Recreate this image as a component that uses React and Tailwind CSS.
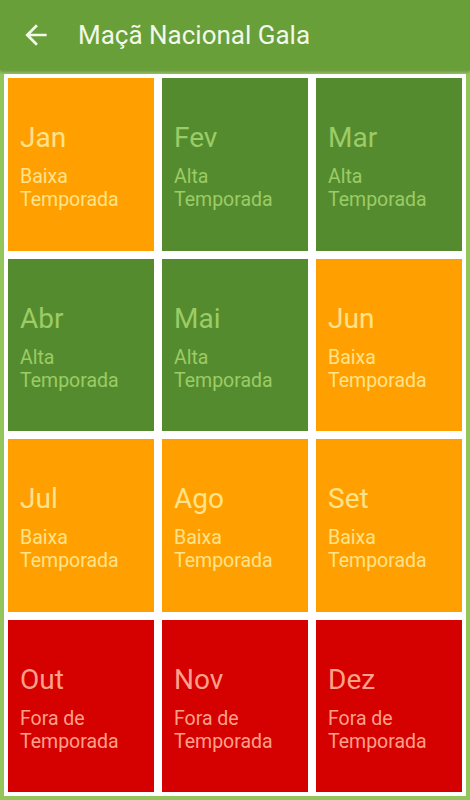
const months = [
  { name: "Jan", season: "baixa" },
  { name: "Fev", season: "alta" },
  { name: "Mar", season: "alta" },
  { name: "Abr", season: "alta" },
  { name: "Mai", season: "alta" },
  { name: "Jun", season: "baixa" },
  { name: "Jul", season: "baixa" },
  { name: "Ago", season: "baixa" },
  { name: "Set", season: "baixa" },
  { name: "Out", season: "fora" },
  { name: "Nov", season: "fora" },
  { name: "Dez", season: "fora" },
];

const seasons = {
  alta: { box: "bg-[#558b2f] text-[#9ccc65]", l1: "Alta", l2: "Temporada" },
  baixa: { box: "bg-[#ffa000] text-[#ffe38c]", l1: "Baixa", l2: "Temporada" },
  fora: { box: "bg-[#d50000] text-[#ffa08a]", l1: "Fora de", l2: "Temporada" },
};

function MonthCard({ name, season }) {
  const s = seasons[season];
  return (
    <div className={`flex flex-col justify-center pl-3 pt-1 ${s.box}`}>
      <div className="text-[28px] leading-[33px]">{name}</div>
      <div className="mt-[11px] text-[19.5px] leading-[23px]">
        <div>{s.l1}</div>
        <div>{s.l2}</div>
      </div>
    </div>
  );
}

export default function App() {
  return (
    <div className="w-[470px] h-[800px] flex flex-col bg-[#92c55a] font-['Roboto',sans-serif]">
      {/* Toolbar */}
      <div className="h-[70px] shrink-0 flex items-center bg-[#689f38] text-[#f1f8e9] shadow-[0_2px_3px_rgba(0,0,0,0.25)] relative z-10">
        <svg className="ml-[20px] w-[32px] h-[32px]" viewBox="0 0 24 24" fill="currentColor">
          <path d="M20 11H7.83l5.59-5.59L12 4l-8 8 8 8 1.41-1.41L7.83 13H20v-2z" />
        </svg>
        <h1 className="ml-[26px] text-[26px] leading-none">Maçã Nacional Gala</h1>
      </div>

      {/* Calendário */}
      <div className="flex-1 p-1 flex">
        <div className="flex-1 bg-white p-1 grid grid-cols-3 grid-rows-4 gap-2">
          {months.map((m) => (
            <MonthCard key={m.name} {...m} />
          ))}
        </div>
      </div>
    </div>
  );
}
